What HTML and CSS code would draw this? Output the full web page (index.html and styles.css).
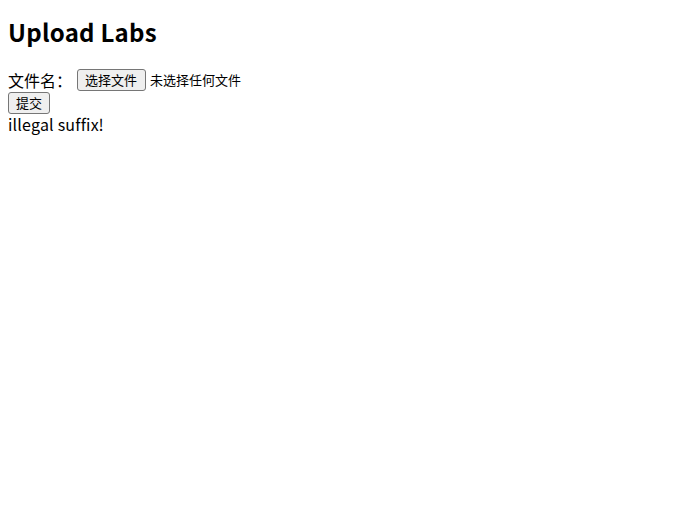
FILE: index.html
```html
<!DOCTYPE html>
<html lang="zh">
<head>
<meta charset="utf-8">
<title>Upload Labs</title>
<link rel="stylesheet" href="styles.css">
</head>
<body>
<h1 class="title">Upload Labs</h1>
<form class="upload-form" onsubmit="return false">
  <div class="file-row">
    <label class="file-label">文件名：</label>
    <button type="button" class="btn btn-file">选择文件</button>
    <span class="file-status">未选择任何文件</span>
  </div>
  <div class="submit-row"><button type="submit" class="btn btn-submit">提交</button></div>
</form>
<div class="message">illegal suffix!</div>
</body>
</html>
```
FILE: styles.css
```css
html, body {
  background: #fff;
}
body {
  margin: 0;
  padding: 8px;
  font-family: "Noto Sans CJK SC", "Noto Sans", sans-serif;
  font-size: 16px;
  line-height: 21px;
  color: #000;
}
.title {
  font-size: 24px;
  font-weight: bold;
  line-height: 32px;
  letter-spacing: 0.25px;
  margin: 8px 0 16px;
}
.upload-form {
  margin: 0;
}
.file-row {
  display: flex;
  align-items: flex-start;
  height: 28px;
}
.file-label {
  width: 64px;
  margin-top: 6px;
  margin-right: 5px;
}
.btn {
  font-family: "Noto Sans CJK SC", sans-serif;
  font-size: 13px;
  line-height: 16px;
  background: #efefef;
  border: 1px solid #767676;
  border-radius: 3px;
  color: #000;
  padding: 2px 7px;
  margin: 0;
  height: 22px;
  display: block;
}
.btn-file {
  margin-top: 5px;
  padding-right: 8px;
}
.file-status {
  font-size: 13px;
  line-height: 16px;
  margin-top: 8px;
  margin-left: 4px;
}
.submit-row {
  height: 22px;
}
.message {
  line-height: 21px;
  letter-spacing: 0.2px;
}
```
